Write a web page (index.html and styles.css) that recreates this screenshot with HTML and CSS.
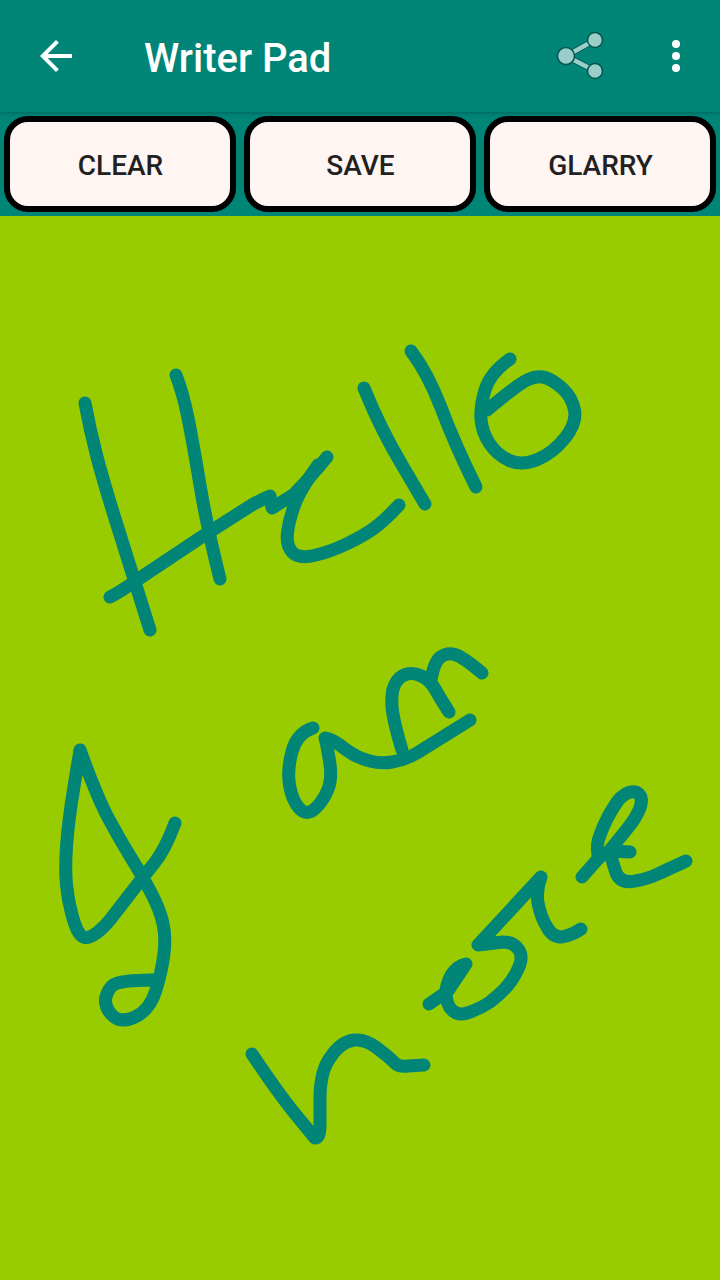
FILE: index.html
```html
<!DOCTYPE html>
<html lang="en">
<head>
  <meta charset="UTF-8">
  <meta name="viewport" content="width=device-width, initial-scale=1.0">
  <title>Writer Pad</title>
  <link rel="stylesheet" href="styles.css">
</head>
<body>
  <div class="app">
    <!-- Toolbar -->
    <header class="toolbar">
      <svg class="icon-back" viewBox="0 0 24 24"><path d="M20 11H7.83l5.59-5.59L12 4l-8 8 8 8 1.41-1.41L7.83 13H20v-2z"/></svg>
      <h1 class="title">Writer Pad</h1>
      <svg class="icon-share" viewBox="0 0 48 48">
        <path class="share-outline" d="M35 8 6 24 35 39"/>
        <path class="share-line" d="M35 8 6 24 35 39"/>
        <circle class="share-dot" cx="35" cy="8" r="7.5"/>
        <circle class="share-dot" cx="6" cy="24" r="8.5"/>
        <circle class="share-dot" cx="35" cy="39" r="7.5"/>
      </svg>
      <div class="icon-more"><span></span><span></span><span></span></div>
    </header>

    <!-- Actions -->
    <div class="actions">
      <button class="action">CLEAR</button>
      <button class="action">SAVE</button>
      <button class="action">GLARRY</button>
    </div>

    <!-- Drawing area, viewBox keeps screen coordinates -->
    <svg class="pad" viewBox="0 216 720 1064">
      <!-- Hello -->
      <path d="M85 403Q90 430 96.5 455Q103 480 115 518.5Q127 557 150 630"/>
      <path d="M176 375Q183 393 188 418Q193 443 200 485Q207 527 220 579"/>
      <path d="M110 597Q120 592 137 580L200 538L247 508Q260 500 270 496L272 508L293 495Q310 478 327 457"/>
      <path d="M318 465Q300 490 294.5 505Q289 520 287.5 532.5Q286 545 292 552Q298 559 314 555.5Q330 552 347.5 543.5Q365 535 375 527.5Q385 520 399 505"/>
      <path d="M364 388Q380 428 402 465L425 504"/>
      <path d="M411 351Q427 372 440 405Q455 445 476 487"/>
      <path d="M510 359Q490 373 485 390Q480 407 481 419.5Q482 432 489.5 443.5Q497 455 509.5 460.5Q522 466 537.5 459.5Q553 453 565 438Q577 423 574.5 410Q572 397 562.5 388.5Q553 380 545 377.5Q537 375 527 380Q517 385 487 410"/>
      <!-- I -->
      <path d="M175 823Q165 850 154 863.5Q143 877 131.5 892Q120 907 111 918.5Q102 930 93.5 935Q85 940 80.5 935Q76 930 72 915Q68 900 66.5 885Q65 870 66.5 846.5Q68 823 74 786.5L80 750Q97 797 108.5 818.5Q120 840 131.5 858.5Q143 877 151.5 893.5Q160 910 163 923.5Q166 937 164 953.5Q162 970 156 990Q150 1010 135 1017Q120 1024 111.5 1014.5Q103 1005 106.5 995Q110 985 117.5 983Q125 981 138 980.5L152 980"/>
      <!-- am -->
      <path d="M313 728Q297 733 292 751.5Q287 770 289.5 785Q292 800 299 808Q306 816 314 809.5Q322 803 327.5 790.5Q333 778 329 758Q327 745 325 738Q333 739 345 749Q357 758 370 761Q381 764 392 762Q405 760 417 753L470 720"/>
      <path d="M402 750Q393 720 392 706.5Q391 693 394.5 685Q398 677 405.5 674.5Q413 672 421.5 676Q430 680 435 689Q440 698 449 712"/>
      <path d="M431 680Q434 662 440.5 657Q447 652 455 654.5Q463 657 482 673"/>
      <!-- here -->
      <path d="M252 1054Q278 1093 296 1115L315 1138Q320 1138 320 1125L320 1095Q321 1070 330 1058Q340 1042 354 1040Q366 1039 377 1048Q388 1056 396 1064Q400 1067 408 1066L424 1065"/>
      <path d="M429 1004L448 991L466 964Q450 968 446 990Q446 1005 452 1010Q458 1016 467 1013Q480 1009 490 1002Q510 987 517 971Q524 958 519 950Q514 942 503 942L478 945L541 877Q536 890 538 903Q541 918 547 927Q552 937 562 937Q572 935 581 929"/>
      <path d="M582 877L597 860Q603 853 612 851L630 852"/>
      <path d="M598 855Q596 845 600 835Q606 818 617 802Q626 790 636 792Q644 796 640 808Q636 818 627 829L610 850Q612 862 616 873Q621 884 635 881Q648 879 660 873L686 861"/>
    </svg>
  </div>
</body>
</html>
```

FILE: styles.css
```css
:root {
  --primary: #008577;
  --pad-bg: #99cc00;
  --button-bg: #fff5f3;
  --text-dark: #212121;
}

body {
  margin: 0;
  font-family: Roboto, "Noto Sans", sans-serif;
  background-color: var(--pad-bg);
}

.app {
  display: flex;
  flex-direction: column;
  height: 1280px;
  overflow: hidden;
}

.toolbar {
  display: flex;
  align-items: center;
  height: 112px;
  padding-left: 32px;
  background-color: var(--primary);
  box-shadow: 0 1px 4px rgba(0, 0, 0, 0.25);
  position: relative;
}

.icon-back {
  width: 48px;
  height: 48px;
  fill: #fff;
}

.title {
  flex: 1;
  margin: 4px 0 0 64px;
  font-size: 40px;
  font-weight: 500;
  color: #fff;
}

.icon-share {
  width: 48px;
  height: 48px;
  margin-right: 64px;
  overflow: visible;
  fill: none;
}

.share-outline {
  stroke: #00564d;
  stroke-width: 6;
}

.share-line {
  stroke: #99cfc8;
  stroke-width: 4.5;
}

.share-dot {
  fill: #99cfc8;
  stroke: #00564d;
  stroke-width: 1.5;
}

.icon-more {
  display: flex;
  flex-direction: column;
  gap: 4px;
  margin-right: 40px;
}

.icon-more span {
  width: 8px;
  height: 8px;
  border-radius: 50%;
  background-color: #fff;
}

.actions {
  display: grid;
  grid-template-columns: repeat(3, 1fr);
  gap: 8px;
  height: 96px;
  padding: 4px;
  background-color: var(--primary);
}

.action {
  padding: 2px 0 0 1px;
  border: 6px solid #000;
  border-radius: 24px;
  background-color: var(--button-bg);
  color: var(--text-dark);
  font-family: inherit;
  font-size: 28px;
  font-weight: 500;
}

.pad {
  display: block;
  flex: 1;
  width: 720px;
  fill: none;
  stroke: var(--primary);
  stroke-width: 13;
  stroke-linecap: round;
  stroke-linejoin: round;
}
```
